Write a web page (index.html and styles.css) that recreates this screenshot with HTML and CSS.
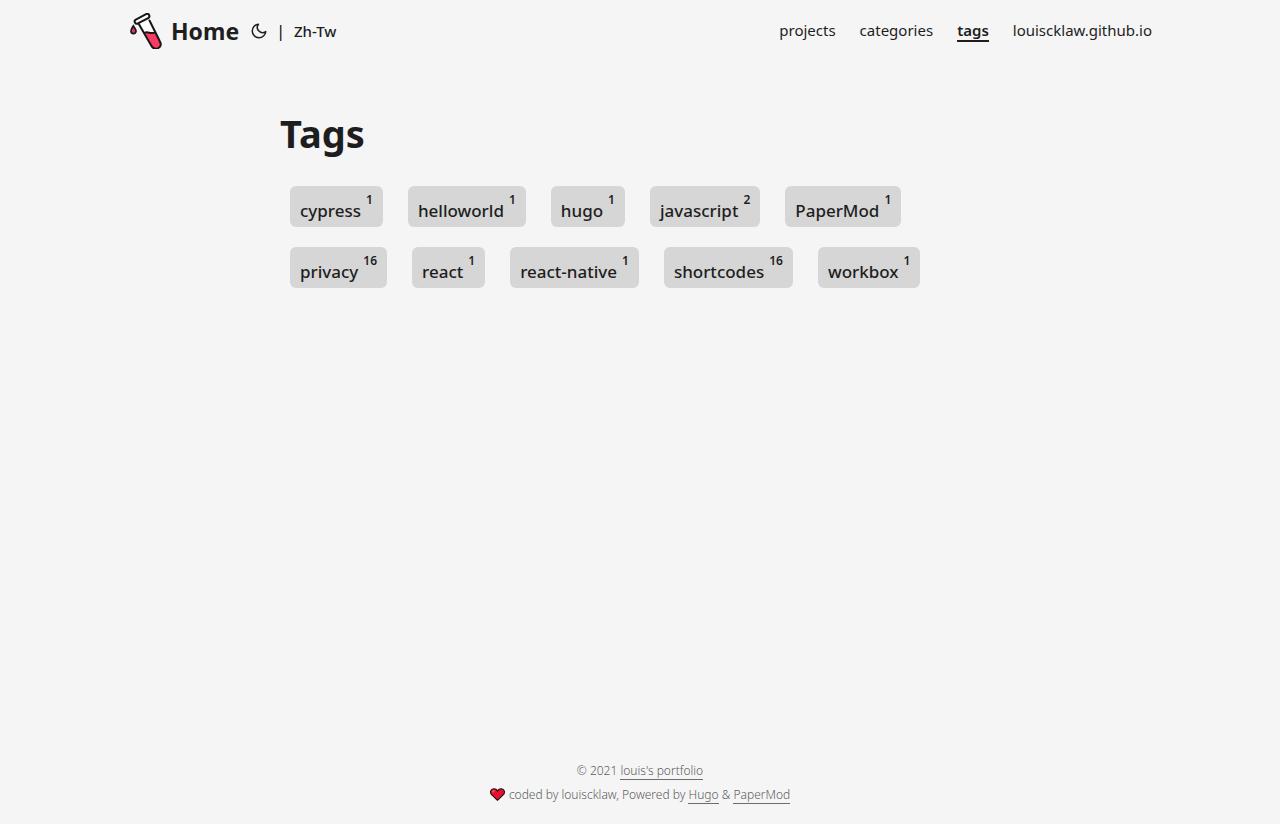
FILE: index.html
```html
<!DOCTYPE html>
<html lang="en">
<head>
<meta charset="utf-8">
<meta name="viewport" content="width=device-width, initial-scale=1">
<title>Tags</title>
<link rel="stylesheet" href="styles.css">
</head>
<body>
<header class="header">
  <nav class="nav">
    <div class="logo">
      <a class="brand" href="#">
        <svg class="brand-icon" viewBox="-1 -1 36 36" aria-hidden="true">
          <path d="M11.5 8.5 L22.5 31.5 C24 34.8 27 35.4 29.5 34 C32 32.6 32.3 30 30.8 27.2 L20 6.5 Z" fill="#fff"/>
          <path d="M15.5 18.5 C19 16.8 21 20.6 26.2 18.4 L30.8 27.2 C32.3 30 32 32.6 29.5 34 C27 35.4 24 34.8 22.5 31.5 Z" fill="#fb3b64"/>
          <path d="M9.5 9.5 L22.5 32 C24 34.8 27 35.4 29.5 34 C32 32.6 32.3 30 30.8 27.2 L20.5 6.5 M15.5 19 C19 16.8 21 20.6 26.2 18.4" fill="none" stroke="#171717" stroke-width="2" stroke-linecap="round"/>
          <rect x="5" y="2.6" width="16" height="4.4" rx="2.2" transform="rotate(-28 13 4.8)" fill="#fff" stroke="#171717" stroke-width="2"/>
          <path d="M4.3 12 C3 14.3 1.8 15.4 2 17.3 C2.3 20.4 6.8 20.3 7 17.2 C7.1 15.3 5.4 14.2 4.3 12 Z" fill="#e0365a" stroke="#171717" stroke-width="1.7"/>
        </svg>
        <span>Home</span>
      </a>
      <button class="theme-toggle" type="button" aria-label="Toggle theme">
        <svg viewBox="0 0 24 24" width="18" height="18" fill="none" stroke="currentColor" stroke-width="2" stroke-linecap="round" stroke-linejoin="round" aria-hidden="true"><path d="M21 12.79A9 9 0 1 1 11.21 3 7 7 0 0 0 21 12.79z"/></svg>
      </button>
      <span class="divider">|</span>
      <a class="lang" href="#">Zh-Tw</a>
    </div>
    <ul class="menu">
      <li><a href="#">projects</a></li>
      <li><a href="#">categories</a></li>
      <li><a class="active" href="#">tags</a></li>
      <li><a href="#">louiscklaw.github.io</a></li>
    </ul>
  </nav>
</header>
<main class="main">
  <h1 class="title">Tags</h1>
  <ul class="tags">
    <li><a href="#">cypress <sup>1</sup></a></li>
    <li><a href="#">helloworld <sup>1</sup></a></li>
    <li><a href="#">hugo <sup>1</sup></a></li>
    <li><a href="#">javascript <sup>2</sup></a></li>
    <li><a href="#">PaperMod <sup>1</sup></a></li>
    <li><a href="#">privacy <sup>16</sup></a></li>
    <li><a href="#">react <sup>1</sup></a></li>
    <li><a href="#">react-native <sup>1</sup></a></li>
    <li><a href="#">shortcodes <sup>16</sup></a></li>
    <li><a href="#">workbox <sup>1</sup></a></li>
  </ul>
</main>
<footer class="footer">
  <p>© 2021 <a href="#">louis's portfolio</a></p>
  <p><svg class="heart" viewBox="0 0 14 12" aria-hidden="true"><path d="M7 11.4 L1 5.6 C-.4 3 1.3 .7 3.6 .7 C5.2 .7 6.3 1.4 7 2.6 C7.7 1.4 8.8 .7 10.4 .7 C12.7 .7 14.4 3 13 5.6 Z" fill="#e8112d" stroke="#111" stroke-width="1"/><path d="M2.4 4.2 C2.5 2.9 3.2 2.4 4.2 2.4" fill="none" stroke="#ff6a78" stroke-width="1"/></svg> coded by louiscklaw, Powered by <a href="#">Hugo</a> &amp; <a href="#">PaperMod</a></p>
</footer>
</body>
</html>
```
FILE: styles.css
```css
* {
  box-sizing: border-box;
  margin: 0;
  padding: 0;
}

body {
  display: flex;
  flex-direction: column;
  min-height: 100vh;
  background: #f5f5f5;
  color: #1e1e1e;
  font-family: "Segoe UI", "Noto Sans", sans-serif;
  font-size: 15px;
}

a {
  color: inherit;
  text-decoration: none;
}

ul {
  list-style: none;
}

.nav {
  display: flex;
  justify-content: space-between;
  align-items: center;
  max-width: 1072px;
  min-height: 62px;
  margin: 0 auto;
  padding: 0 24px;
}

.logo {
  display: flex;
  align-items: center;
}

.brand {
  display: flex;
  align-items: center;
  gap: 7px;
  font-size: 23px;
  font-weight: 700;
}

.brand-icon {
  width: 36px;
  height: 36px;
}

.theme-toggle {
  display: flex;
  margin: 0 8px 0 11px;
  border: 0;
  background: none;
  color: inherit;
  cursor: pointer;
}

.divider {
  font-size: 16px;
  font-weight: 500;
}

.lang {
  margin-left: 9px;
  font-weight: 500;
}

.menu {
  display: flex;
  gap: 24px;
  font-weight: 400;
}

.menu a {
  display: block;
  line-height: 20px;
  border-bottom: 2px solid transparent;
}

.menu .active {
  border-color: currentColor;
  font-weight: 600;
}

.main {
  flex: 1;
  width: 100%;
  max-width: 768px;
  margin: 0 auto;
  padding: 45px 24px;
}

.title {
  font-size: 38px;
  line-height: 52px;
}

.tags {
  display: flex;
  flex-wrap: wrap;
  gap: 20px 25px;
  padding: 27px 10px;
}

.tags a {
  display: flex;
  gap: 5px;
  height: 41px;
  padding: 0 10px;
  border-radius: 6px;
  background: #d6d6d6;
  font-size: 17px;
  font-weight: 500;
  line-height: 49px;
}

.tags sup {
  font-size: 12px;
  font-weight: 600;
  line-height: 27px;
}

.footer {
  padding-bottom: 17px;
  color: #5c5c5c;
  font-size: 12px;
  font-weight: 300;
  line-height: 24px;
  text-align: center;
}

.footer a {
  border-bottom: 1px solid #6c6c6c;
}

.heart {
  width: 15px;
  height: 13px;
  margin-right: 1px;
  vertical-align: -2px;
}
```
